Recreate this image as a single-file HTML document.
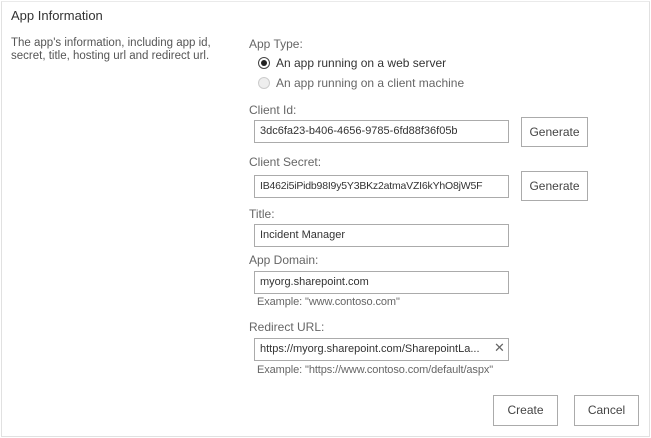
<!DOCTYPE html>
<html><head><meta charset="utf-8"><style>
body{margin:0;width:651px;height:438px;background:#fff;font-family:"Liberation Sans",sans-serif;font-size:12px;color:#444;position:relative;overflow:hidden}
.a{position:absolute;white-space:nowrap}
.box{position:absolute;border:1px solid #e1e1e1;left:1px;top:1px;width:647px;height:434px;border-top-color:#eaeaea}
.in{position:absolute;border:1px solid #ababab;background:#fff;box-sizing:border-box;height:23px;color:#333;padding-left:5px;line-height:21px;font-size:11px;white-space:nowrap;overflow:hidden}
.btn{position:absolute;border:1px solid #ababab;background:#fff;box-sizing:border-box;text-align:center;color:#444;font-size:12px}
.lbl{color:#666}
.rad{position:absolute;width:12px;height:12px;border-radius:50%;box-sizing:border-box}
</style></head><body>
<div class="box"></div>
<div class="a" style="left:11px;top:8px;font-size:13px;color:#333">App Information</div>
<div class="a" style="left:11px;top:37px;line-height:13px;color:#555;font-size:11.5px">The app's information, including app id,<br>secret, title, hosting url and redirect url.</div>
<div class="a lbl" style="left:249px;top:37px">App Type:</div>
<div class="rad" style="left:258px;top:57px;border:1px solid #444;background:#fff"><div style="position:absolute;left:2px;top:2px;width:6px;height:6px;border-radius:50%;background:#222"></div></div>
<div class="a" style="left:276px;top:56px;color:#333">An app running on a web server</div>
<div class="rad" style="left:258px;top:77px;border:1px solid #ccc;background:#eee"></div>
<div class="a lbl" style="left:276px;top:76px">An app running on a client machine</div>

<div class="a lbl" style="left:249px;top:103px">Client Id:</div>
<div class="in" style="left:254px;top:120px;width:255px">3dc6fa23-b406-4656-9785-6fd88f36f05b</div>
<div class="btn" style="left:521px;top:117px;width:67px;height:30px;line-height:28px">Generate</div>

<div class="a lbl" style="left:249px;top:155px">Client Secret:</div>
<div class="in" style="left:254px;top:175px;width:255px;font-size:10.5px;letter-spacing:-0.2px">IB462i5iPidb98I9y5Y3BKz2atmaVZI6kYhO8jW5F</div>
<div class="btn" style="left:521px;top:171px;width:67px;height:30px;line-height:28px">Generate</div>

<div class="a lbl" style="left:249px;top:207px">Title:</div>
<div class="in" style="left:254px;top:224px;width:255px">Incident Manager</div>

<div class="a lbl" style="left:249px;top:253px">App Domain:</div>
<div class="in" style="left:254px;top:271px;width:255px">myorg.sharepoint.com</div>
<div class="a lbl" style="left:257px;top:296px;font-size:11px;letter-spacing:-0.1px">Example: "www.contoso.com"</div>

<div class="a lbl" style="left:249px;top:320px">Redirect URL:</div>
<div class="in" style="left:254px;top:338px;width:255px">https://myorg.sharepoint.com/SharepointLa...</div>
<div class="a" style="left:494px;top:340px;color:#666;font-size:13px">✕</div>
<div class="a lbl" style="left:257px;top:364px;font-size:11px;letter-spacing:-0.1px">Example: "https://www.contoso.com/default/aspx"</div>

<div class="btn" style="left:493px;top:395px;width:65px;height:31px;line-height:29px">Create</div>
<div class="btn" style="left:574px;top:395px;width:65px;height:31px;line-height:29px">Cancel</div>
</body></html>
